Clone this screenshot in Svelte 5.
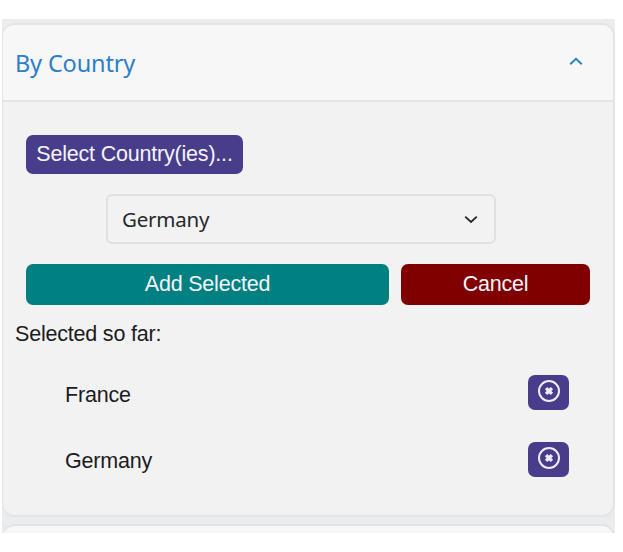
<script>
  let open = $state(true);
  let selected = $state(['France', 'Germany']);
  const remove = (name) => (selected = selected.filter((c) => c !== name));
</script>

<main class="panel">
  <section class="card">
    <button class="header" onclick={() => (open = !open)}>
      <span class="title">By Country</span>
      <svg class="chevron" width="14" height="9" viewBox="0 0 14 9"><path d="M1.2 7.2 7 1.8l5.8 5.4" /></svg>
    </button>
    {#if open}
      <div class="body">
        <button class="pick"><span>Select Country(ies)...</span></button>
        <button class="select">
          <span>Germany</span>
          <svg class="chevron" width="14" height="9" viewBox="0 0 14 9"><path d="M1.2 1.6 7 7l5.8-5.4" /></svg>
        </button>
        <div class="actions">
          <button class="add"><span>Add Selected</span></button>
          <button class="cancel"><span>Cancel</span></button>
        </div>
        <p><span>Selected so far:</span></p>
        <ul>
          {#each selected as name}
            <li>
              <span>{name}</span>
              <button class="remove" aria-label="Remove {name}" onclick={() => remove(name)}>
                <svg width="24" height="24" viewBox="0 0 24 24">
                  <circle cx="12" cy="12" r="10" />
                  <path d="m9.1 9.1 5.8 5.8m0-5.8-5.8 5.8" />
                </svg>
              </button>
            </li>
          {/each}
        </ul>
      </div>
    {/if}
  </section>
  <section class="card next"></section>
</main>

<style>
  :global(body) { margin: 0; background: #fff; }
  * { box-sizing: border-box; }
  button { border: 0; margin: 0; padding: 0; font: inherit; letter-spacing: inherit; color: inherit; background: none; }
  .panel {
    width: 613px;
    height: 514px;
    margin: 19px 0 0 2px;
    padding-top: 4px;
    overflow: hidden;
    background: #ebecee;
    font: 21.5px/26px "Liberation Sans", Arial, sans-serif;
    letter-spacing: -0.2px;
    color: #212529;
  }
  .card {
    height: 494px;
    border: 2px solid #e3e4e6;
    border-left-width: 1px;
    border-radius: 13px;
    background: #f2f2f2;
    overflow: hidden;
  }
  .next { margin-top: 7px; background: #f7f7f7; }
  .header {
    display: flex;
    justify-content: space-between;
    align-items: center;
    width: 100%;
    height: 77px;
    padding: 0 30px 0 12px;
    border-bottom: 2px solid #e3e4e6;
    background: #f7f7f7;
    color: #2b7fcb;
    font: 23.5px/30px "Noto Sans", "Segoe UI", sans-serif;
    letter-spacing: -0.15px;
  }
  .header .chevron { margin-bottom: 2px; }
  .chevron { fill: none; stroke: currentColor; stroke-width: 1.9; }
  .body { padding: 33px 23px 0 23px; color: #1c1c1e; }
  .body button { display: flex; align-items: center; }
  .body .pick, .actions button, .remove { justify-content: center; border-radius: 7px; color: #f5f3fa; }
  .body .pick { width: 217px; height: 39px; padding-bottom: 2px; background: #483d8b; }
  .body .select {
    justify-content: space-between;
    width: 390px;
    height: 50px;
    margin: 20px 0 20px 80px;
    padding: 0 16px 0 14px;
    border: 2px solid #dfe0e2;
    border-radius: 6px;
    color: #25282c;
    font: 20.5px/28px "Noto Sans", "Segoe UI", sans-serif;
    letter-spacing: -0.2px;
  }
  .actions { display: grid; grid-template-columns: 363px 189px; gap: 12px; }
  .actions button { height: 41px; padding-bottom: 2px; }
  .add { background: #008080; }
  .cancel { background: #800000; }
  p { margin: 16px 0 28px -11px; }
  ul { list-style: none; margin: 0; padding: 0 21px 0 39px; }
  li { display: flex; justify-content: space-between; align-items: flex-start; height: 67px; }
  li span { padding-top: 7px; }
  li + li span { padding-top: 6px; }
  .body .remove { width: 41px; height: 35px; padding-bottom: 3px; background: #483d8b; }
  .remove svg { fill: none; stroke: #f1ecfc; }
  .remove circle { stroke-width: 2; }
  .remove path { stroke-width: 3.4; }
</style>
